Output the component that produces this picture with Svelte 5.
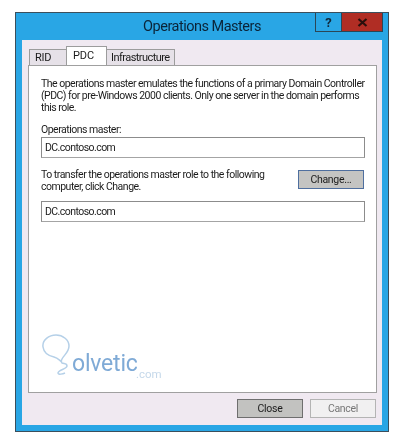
<script>
  let activeTab = 'PDC';
  const tabs = ['RID', 'PDC', 'Infrastructure'];
</script>

<div class="page">
  <div class="window">
    <header class="titlebar">
      <h1>Operations Masters</h1>
      <div class="caption">
        <span class="help">?</span>
        <span class="close">
          <svg width="11" height="9" viewBox="0 0 11 9"><path d="M1.5 1 9.5 8M9.5 1 1.5 8" stroke="#2a0f0c" stroke-width="2.2" fill="none" /></svg>
        </span>
      </div>
    </header>

    <div class="client">
      <div class="tabs">
        {#each tabs as tab}
          <span class="tab" class:active={tab === activeTab}>{tab}</span>
        {/each}
      </div>

      <section class="pane">
        <p class="intro">The operations master emulates the functions of a primary Domain Controller (PDC) for pre-Windows 2000 clients. Only one server in the domain performs this role.</p>
        <label for="current">Operations master:</label>
        <input id="current" type="text" value="DC.contoso.com" readonly />

        <div class="transfer">
          <p>To transfer the operations master role to the following computer, click Change.</p>
          <button class="btn change">Change...</button>
        </div>
        <input type="text" value="DC.contoso.com" readonly />

        <div class="logo">
          <svg width="36" height="44" viewBox="0 0 36 44">
            <path d="M20 28C17 26 16 24 12 23 7 22 2 20 1 13 0 6 7 1 14 1c7 0 13 5 13 11 0 6-5 9-7 13-1 2-1 3 0 4 2 1 5 0 5 3 0 3-9 4-9 7 0 2 5 1 7 0" fill="none" stroke="#b5d0e8" stroke-width="1.5" />
          </svg>
          <span class="brand">olvetic</span>
          <span class="tld">.com</span>
        </div>
      </section>

      <footer class="actions">
        <button class="btn closebtn">Close</button>
        <button class="btn cancel">Cancel</button>
      </footer>
    </div>
  </div>
</div>

<style>
  :global(body) {
    margin: 0;
    background: #fff;
  }

  .page {
    width: 402px;
    height: 434px;
    padding: 12px 13px 2px 15px;
    box-sizing: border-box;
    font-family: Roboto, "Liberation Sans", sans-serif;
    color: #1c1c1c;
  }

  .window {
    height: 420px;
    box-sizing: border-box;
    background: #29a6e5;
    border: 1px solid #3b4f5c;
    display: flex;
    flex-direction: column;
    position: relative;
    filter: blur(0.35px);
  }

  .titlebar {
    height: 27px;
    flex: none;
    display: flex;
    align-items: center;
    justify-content: center;
  }

  h1 {
    margin: 0;
    font-size: 14.5px;
    font-weight: 400;
    letter-spacing: -0.5px;
    color: #0b2438;
  }

  .caption {
    position: absolute;
    top: 0;
    right: 5px;
    display: flex;
    height: 19px;
  }

  .help,
  .close {
    display: flex;
    align-items: center;
    justify-content: center;
    box-sizing: border-box;
    border: 1px solid #2a4656;
    border-top: 0;
  }

  .help {
    width: 26px;
    font-size: 13px;
    font-weight: 700;
    color: #10283a;
    border-right: 0;
  }

  .close {
    width: 42px;
    background: #b02d24;
  }

  .client {
    flex: 1;
    margin: 0 6px 6px 6px;
    background: #f0e9f1;
    display: flex;
    flex-direction: column;
    padding: 0 5px 0 6px;
  }

  .tabs {
    display: flex;
    align-items: flex-end;
    height: 25px;
    padding-left: 1px;
  }

  .tab {
    height: 16px;
    box-sizing: border-box;
    border: 1px solid #9c9c9c;
    border-bottom: 0;
    background: #e6e1e8;
    font-size: 11px;
    line-height: 15px;
    padding: 0 4px;
    margin-right: -1px;
    letter-spacing: -0.55px;
  }

  .tab:first-child {
    width: 38px;
    padding-left: 5px;
    letter-spacing: -0.3px;
  }

  .tab.active {
    height: 20px;
    width: 41px;
    margin-bottom: -1px;
    background: #fff;
    padding: 0 0 0 6px;
    line-height: 17px;
    position: relative;
    letter-spacing: -0.1px;
  }

  .pane {
    height: 328px;
    box-sizing: border-box;
    background: #fff;
    border: 1px solid #a0a0a0;
    padding: 12px 11px 0 12px;
    position: relative;
    display: flex;
    flex-direction: column;
    font-size: 10.5px;
    letter-spacing: -0.5px;
  }

  .intro {
    margin: 0 0 9px;
    line-height: 12px;
    width: 326px;
  }

  label {
    line-height: 14px;
  }

  input {
    width: 324px;
    height: 21px;
    box-sizing: border-box;
    border: 1px solid #8c8c8c;
    border-bottom-color: #a4a4a4;
    outline: 0;
    padding: 0 3px;
    font: inherit;
    font-size: 10.5px;
    letter-spacing: -0.55px;
    color: #1c1c1c;
    background: #fff;
  }

  .transfer {
    display: flex;
    justify-content: space-between;
    align-items: flex-start;
    width: 323px;
    margin: 9px 0 1px;
    height: 33px;
  }

  .transfer p {
    margin: 2px 0 0;
    width: 240px;
    line-height: 12px;
  }

  .btn {
    width: 66px;
    height: 19px;
    padding: 0;
    box-sizing: border-box;
    font: inherit;
    font-size: 10.5px;
    letter-spacing: -0.3px;
    color: #1c1c1c;
  }

  .change {
    margin-top: 3px;
    background: #c4c4c2;
    border: 1px solid #4f6f9f;
  }

  .logo {
    position: absolute;
    left: 13px;
    bottom: 11px;
    width: 130px;
    height: 47px;
    letter-spacing: 0;
  }

  .logo svg {
    position: absolute;
    left: 0;
    top: 0;
  }

  .brand {
    position: absolute;
    left: 30px;
    top: 17px;
    font-size: 23px;
    line-height: 26px;
    letter-spacing: -0.2px;
    color: #7faad6;
  }

  .tld {
    position: absolute;
    left: 94px;
    top: 33px;
    font-size: 11.5px;
    line-height: 14px;
    color: #c5d8ea;
  }

  .actions {
    display: flex;
    justify-content: flex-end;
    gap: 7px;
    padding-top: 6px;
    padding-right: 1px;
  }

  .closebtn {
    background: #c2c2c0;
    border: 1px solid #6e6e6e;
  }

  .cancel {
    background: #f1f0f1;
    border: 1px solid #b4b4b4;
    color: #777;
  }
</style>
